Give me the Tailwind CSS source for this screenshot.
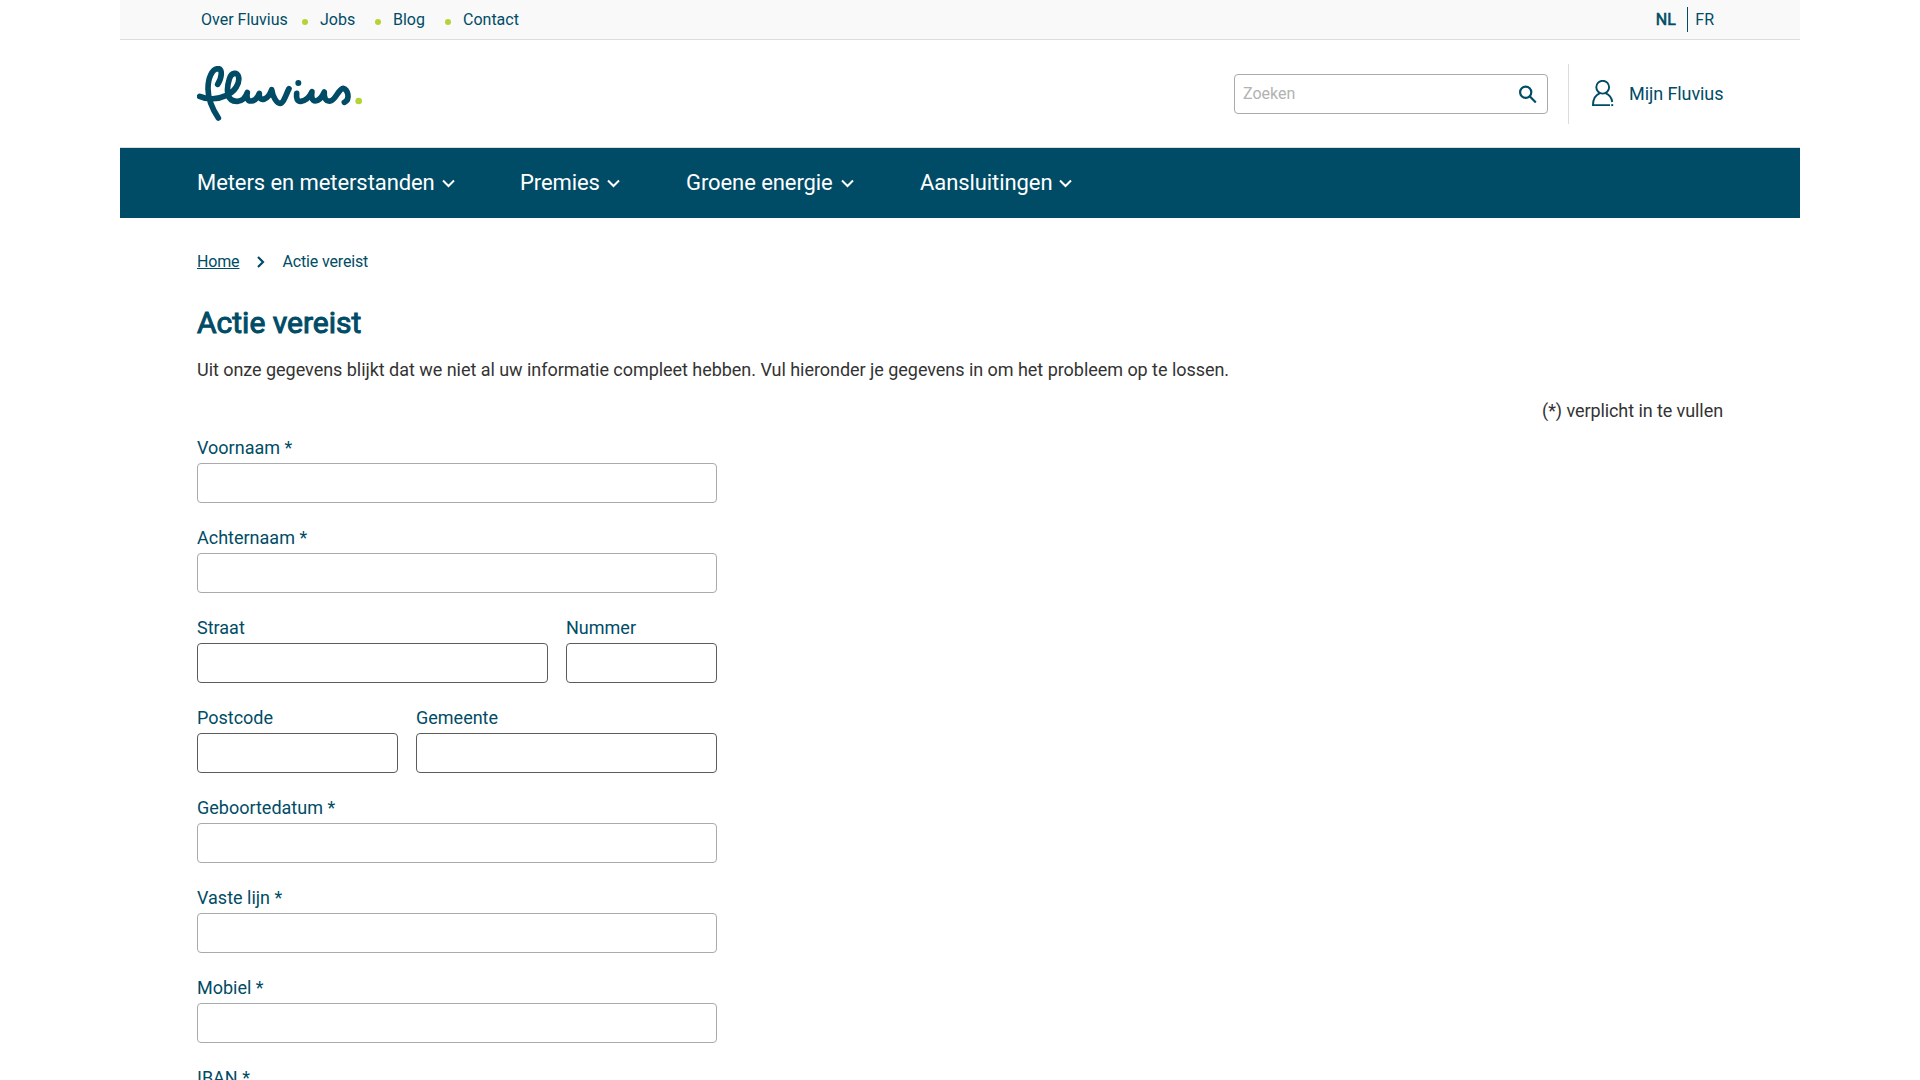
<!DOCTYPE html>
<html lang="nl">
<head>
    <meta charset="UTF-8">
    <meta name="viewport" content="width=device-width, initial-scale=1.0">
    <title>Actie vereist | Fluvius</title>
    <script src="https://cdn.jsdelivr.net/npm/@tailwindcss/browser@4"></script>
    <style>
        body {
            font-family: Roboto, sans-serif;
        }
    </style>
</head>
<body class="bg-white text-lg text-[#333333] h-screen overflow-hidden">
    <div class="w-[1680px] mx-auto">
        <!-- Top bar -->
        <div class="h-10 bg-[#f9f9f9] border-b border-[#dcdddd] flex justify-between items-center pl-[81px] pr-[86px] text-base text-[#004c66]">
            <ul class="flex items-center">
                <li class="w-[101px]"><a href="#">Over Fluvius</a></li>
                <li class="w-[73px] flex items-center gap-3"><span class="size-1.5 rounded-full bg-[#b4d334] mt-[5px]"></span><a href="#">Jobs</a></li>
                <li class="w-[70px] flex items-center gap-3"><span class="size-1.5 rounded-full bg-[#b4d334] mt-[5px]"></span><a href="#">Blog</a></li>
                <li class="flex items-center gap-3"><span class="size-1.5 rounded-full bg-[#b4d334] mt-[5px]"></span><a href="#">Contact</a></li>
            </ul>
            <div class="flex items-center">
                <a href="#" class="pr-[11.500px] [-webkit-text-stroke:0.6px]">NL</a>
                <a href="#" class="border-l border-[#004c66] h-[25px] leading-[25px] pl-[7px]">FR</a>
            </div>
        </div>

        <!-- Header -->
        <header class="h-[108px] border-b border-[#dcdddd] px-[77px] flex justify-between items-center">
            <a href="#" aria-label="Fluvius">
                <svg class="w-[166px] h-14" viewBox="21 30 498 168" fill="none" stroke="#004c66" stroke-width="17" stroke-linecap="round" stroke-linejoin="round">
                    <path d="M83 85C96 66 98 38 85 38C66 38 54 66 54 98C54 134 68 160 85 186"/>
                    <path d="M29 121C52 132 84 130 108 119C136 106 149 82 146 64C143 46 124 49 118 69C108 101 109 137 142 136C160 135 168 121 172 109C169 125 173 136 184 135C197 134 204 122 208 112C207 126 213 133 223 129C236 124 241 112 245 101C248 122 260 142 270 142C281 142 288 115 297 98"/>
                    <path d="M320 112C318 128 322 137 333 136C351 134 360 120 366 107C363 122 366 135 376 135C390 134 398 119 403 108C401 125 407 137 421 135C438 132 445 98 460 97C472 98 483 130 463 139"/>
                    <circle cx="325" cy="81" r="9" fill="#004c66" stroke="none"/>
                    <circle cx="506" cy="135" r="10" fill="#b4d334" stroke="none"/>
                </svg>
            </a>
            <div class="flex items-center">
                <div class="w-[314px] h-10 border border-[#aaaaaa] rounded flex items-center justify-between pl-2 pr-[10px]">
                    <input type="text" placeholder="Zoeken" class="w-60 text-base outline-none placeholder:text-[#b2b2b2]">
                    <svg class="size-5" viewBox="0 0 20 20" fill="none" stroke="#004c66" stroke-width="2.2">
                        <circle cx="8.7" cy="8.2" r="5.6"/>
                        <path d="M12.700 12.200L18.800 18.500"/>
                    </svg>
                </div>
                <a href="#" class="ml-5 w-[155px] h-[60px] border-l border-[#dcdddd] pl-[22px] flex items-center text-[#004c66] whitespace-nowrap">
                    <svg class="w-[23px] h-[27px] shrink-0" viewBox="0 0 23 27" fill="none" stroke="#004c66" stroke-width="1.9">
                        <circle cx="11.700" cy="7.2" r="6.4"/>
                        <path d="M9 13.200C4.500 15 2 19.500 2 25.100H19M14.400 13.200C18.500 14.800 20.600 18 21.300 22"/>
                        <path d="M20.200 25.100H22.200"/>
                    </svg>
                    <span class="ml-[15px] tracking-[-0.08px]">Mijn Fluvius</span>
                </a>
            </div>
        </header>

        <!-- Navigation -->
        <nav class="h-[70px] bg-[#004c66] px-[77px] flex items-center text-white text-[22px] tracking-[-0.08px]">
            <a href="#" class="w-[323px] flex items-center gap-[7px]">Meters en meterstanden
                <svg class="w-[13px] h-[9px]" viewBox="0 0 13 9" fill="none" stroke="currentColor" stroke-width="2"><path d="M1 1.500L6.500 7L12 1.500"/></svg>
            </a>
            <a href="#" class="w-[166px] flex items-center gap-[7px]">Premies
                <svg class="w-[13px] h-[9px]" viewBox="0 0 13 9" fill="none" stroke="currentColor" stroke-width="2"><path d="M1 1.500L6.500 7L12 1.500"/></svg>
            </a>
            <a href="#" class="w-[234px] flex items-center gap-2">Groene energie
                <svg class="w-[13px] h-[9px]" viewBox="0 0 13 9" fill="none" stroke="currentColor" stroke-width="2"><path d="M1 1.500L6.500 7L12 1.500"/></svg>
            </a>
            <a href="#" class="flex items-center gap-[7px]">Aansluitingen
                <svg class="w-[13px] h-[9px]" viewBox="0 0 13 9" fill="none" stroke="currentColor" stroke-width="2"><path d="M1 1.500L6.500 7L12 1.500"/></svg>
            </a>
        </nav>

        <main class="px-[77px] pt-8">
            <!-- Breadcrumb -->
            <div class="flex items-center text-base text-[#004c66] tracking-[-0.150px]">
                <a href="#" class="underline">Home</a>
                <svg class="w-2 h-3 ml-[18px] mr-[17px]" viewBox="0 0 8 12" fill="none" stroke="currentColor" stroke-width="2.2"><path d="M1 1L6 6L1 11"/></svg>
                <span>Actie vereist</span>
            </div>

            <h1 class="mt-[29px] text-[30px] leading-[40px] text-[#004c66] [-webkit-text-stroke:1px]">Actie vereist</h1>
            <p class="mt-[13px] leading-7 tracking-[-0.040px]">Uit onze gegevens blijkt dat we niet al uw informatie compleet hebben. Vul hieronder je gegevens in om het probleem op te lossen.</p>
            <p class="mt-[13px] leading-7 text-right tracking-[-0.080px]">(*) verplicht in te vullen</p>

            <form class="mt-[9px] w-[520px] flex flex-col gap-[21px] text-[#004c66]">
                <div>
                    <label for="voornaam" class="block leading-7 mb-px">Voornaam *</label>
                    <input type="text" id="voornaam" class="block w-full h-10 border border-[#aaaaaa] rounded">
                </div>
                <div>
                    <label for="achternaam" class="block leading-7 mb-px">Achternaam *</label>
                    <input type="text" id="achternaam" class="block w-full h-10 border border-[#aaaaaa] rounded">
                </div>
                <div class="flex gap-[18px]">
                    <div class="w-[351px]">
                        <label for="straat" class="block leading-7 mb-px">Straat</label>
                        <input type="text" id="straat" class="block w-full h-10 border border-[#5c5c5c] rounded">
                    </div>
                    <div class="w-[151px]">
                        <label for="nummer" class="block leading-7 mb-px">Nummer</label>
                        <input type="text" id="nummer" class="block w-full h-10 border border-[#5c5c5c] rounded">
                    </div>
                </div>
                <div class="flex gap-[18px]">
                    <div class="w-[201px]">
                        <label for="postcode" class="block leading-7 mb-px">Postcode</label>
                        <input type="text" id="postcode" class="block w-full h-10 border border-[#5c5c5c] rounded">
                    </div>
                    <div class="w-[301px]">
                        <label for="gemeente" class="block leading-7 mb-px">Gemeente</label>
                        <input type="text" id="gemeente" class="block w-full h-10 border border-[#5c5c5c] rounded">
                    </div>
                </div>
                <div>
                    <label for="geboortedatum" class="block leading-7 mb-px">Geboortedatum *</label>
                    <input type="text" id="geboortedatum" class="block w-full h-10 border border-[#aaaaaa] rounded">
                </div>
                <div>
                    <label for="vast" class="block leading-7 mb-px">Vaste lijn *</label>
                    <input type="text" id="vast" class="block w-full h-10 border border-[#aaaaaa] rounded">
                </div>
                <div>
                    <label for="mobiel" class="block leading-7 mb-px">Mobiel *</label>
                    <input type="text" id="mobiel" class="block w-full h-10 border border-[#aaaaaa] rounded">
                </div>
                <div>
                    <label for="iban" class="block leading-7 mb-px">IBAN *</label>
                    <input type="text" id="iban" class="block w-full h-10 border border-[#aaaaaa] rounded">
                </div>
            </form>
        </main>
    </div>
</body>
</html>
